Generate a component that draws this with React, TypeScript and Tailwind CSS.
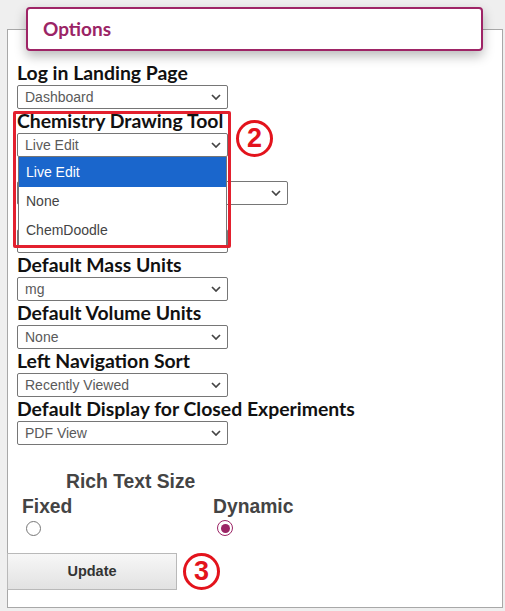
import React from 'react'

const lato = { fontFamily: 'Lato, "Noto Sans", sans-serif' }

function Chevron() {
  return (
    <svg width="10" height="6" viewBox="0 0 10 6" className="shrink-0">
      <path d="M1 1l4 4 4-4" fill="none" stroke="#444" strokeWidth="1.7" />
    </svg>
  )
}

function FakeSelect({ value, wide }: { value: string; wide?: boolean }) {
  return (
    <div
      className={`flex h-[24px] items-center justify-between rounded-[2px] border border-[#767676] bg-white pl-[7px] pr-[6px] font-['Liberation_Sans',Arial,sans-serif] text-[14px] text-[#5a5a5a] ${
        wide ? 'w-[271px]' : 'w-[211px]'
      }`}
    >
      <span className="leading-none">{value}</span>
      <Chevron />
    </div>
  )
}

function Field({ label, value, wide }: { label: string; value: string; wide?: boolean }) {
  return (
    <div>
      <div className="h-[24px] text-[19.4px] font-bold leading-[24px] text-[#111]" style={lato}>
        {label}
      </div>
      <FakeSelect value={value} wide={wide} />
    </div>
  )
}

function Circled({ n }: { n: string }) {
  return (
    <div className="flex h-[37px] w-[37px] items-center justify-center rounded-full border-[3px] border-[#e3131c] font-['Liberation_Sans',Arial,sans-serif] text-[27px] font-bold leading-none text-[#e3131c]">
      {n}
    </div>
  )
}

export default function App() {
  return (
    <main className="relative h-[611px] w-[505px] overflow-hidden bg-[#efefef] pt-[29px] pl-[7px]">
      {/* options header floats over the panel top */}
      <div className="absolute left-[26px] top-[7px] z-10 flex h-[44px] w-[457px] items-center rounded-[4px] border-2 border-[#9e2466] bg-white pl-[15px] shadow-[0_5px_12px_rgba(0,0,0,0.28)]">
        <span className="text-[19px] font-bold text-[#9b2465]" style={lato}>
          Options
        </span>
      </div>

      <div className="h-[579px] w-[496px] border border-[#a8a8a8] bg-white pt-[31px]">
        <div className="relative pl-[9px]">
          <Field label="Log in Landing Page" value="Dashboard" />

          <div className="relative">
            <Field label="Chemistry Drawing Tool" value="Live Edit" />
            {/* open dropdown */}
            <div className="absolute left-[1px] top-[48px] z-10 w-[209px] border border-t-0 border-[#767676] bg-white font-['Liberation_Sans',Arial,sans-serif] text-[14px]">
              <div className="flex h-[30px] items-center bg-[#1a66cc] pl-[7px] text-white">Live Edit</div>
              <div className="flex h-[29px] items-center pl-[7px] text-[#444]">None</div>
              <div className="flex h-[29px] items-center pl-[7px] text-[#444]">ChemDoodle</div>
            </div>
            {/* annotation */}
            <div className="absolute -left-[4px] top-[2px] z-20 h-[137px] w-[218px] rounded-[2px] border-[3px] border-[#e3202e]" />
            <div className="absolute left-[219px] top-[11px] z-20">
              <Circled n="2" />
            </div>
          </div>

          {/* rows covered by the open list */}
          <Field label="" value="" wide />
          <Field label="" value="" />
          <Field label="Default Mass Units" value="mg" />
          <Field label="Default Volume Units" value="None" />
          <Field label="Left Navigation Sort" value="Recently Viewed" />
          <Field label="Default Display for Closed Experiments" value="PDF View" />
        </div>

        <div className="mt-[26px] font-['Liberation_Sans',Arial,sans-serif] font-bold text-[#444]">
          <div className="pl-[58px] text-[19.3px] leading-[22px]">Rich Text Size</div>
          <div className="mt-[3px] flex text-[19.3px] leading-[22px]">
            <div className="w-[205px] pl-[14px]">
              <div>Fixed</div>
              <div className="ml-[4px] mt-[3px] h-[15px] w-[15px] rounded-full border border-[#777] bg-white" />
            </div>
            <div>
              <div>Dynamic</div>
              <div className="ml-[4px] mt-[2px] flex h-[16px] w-[16px] items-center justify-center rounded-full border border-[#9b2465] bg-white">
                <div className="h-[9px] w-[9px] rounded-full bg-[#9b2465]" />
              </div>
            </div>
          </div>
        </div>

        <div className="mt-[17px] flex items-center gap-[6px]">
          <button className="-ml-px h-[37px] w-[170px] border border-[#b9b9b9] bg-gradient-to-b from-[#f7f7f7] to-[#e2e2e2] font-['Liberation_Sans',Arial,sans-serif] text-[14.5px] font-bold text-[#333]">
            Update
          </button>
          <Circled n="3" />
        </div>
      </div>
    </main>
  )
}
